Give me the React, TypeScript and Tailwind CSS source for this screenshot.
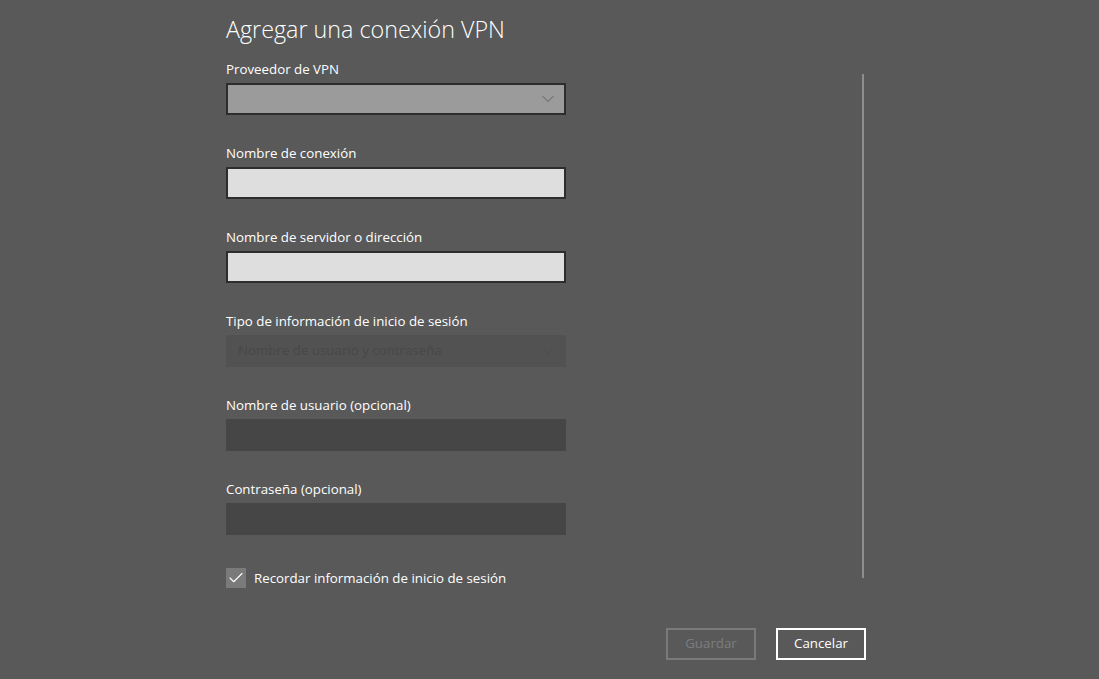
import { Check, ChevronDown } from 'lucide-react';

const fieldBase = 'h-[32px] w-[340px] border-2';

function Label({ children }: { children: React.ReactNode }) {
  return <div className="h-[20px] text-[13.3px] leading-[20px] text-white">{children}</div>;
}

export default function App() {
  return (
    <div className="flex h-[679px] w-[1099px] bg-[#595959] font-['Open_Sans',sans-serif]">
      <div className="flex w-[650px] flex-col pl-[226px]">
        <h1 className="mt-[13px] h-[32px] text-[23.3px] font-light leading-[32px] text-white">
          Agregar una conexión VPN
        </h1>

        <div className="mt-[14px] flex flex-col gap-[4px]">
          <Label>Proveedor de VPN</Label>
          <div className={`${fieldBase} flex items-center justify-end border-[#2d2d2d] bg-[#9b9b9b] pr-[6px]`}>
            <ChevronDown size={20} strokeWidth={1} className="text-[#505050]" />
          </div>
        </div>

        <div className="mt-[28px] flex flex-col gap-[4px]">
          <Label>Nombre de conexión</Label>
          <div className={`${fieldBase} border-[#2d2d2d] bg-[#dedede]`} />
        </div>

        <div className="mt-[28px] flex flex-col gap-[4px]">
          <Label>Nombre de servidor o dirección</Label>
          <div className={`${fieldBase} border-[#2d2d2d] bg-[#dedede]`} />
        </div>

        <div className="mt-[28px] flex flex-col gap-[4px]">
          <Label>Tipo de información de inicio de sesión</Label>
          <div className={`${fieldBase} flex items-center justify-between border-transparent bg-[#525252] pl-[10px] pr-[6px]`}>
            <span className="text-[13.3px] text-[#484848]">Nombre de usuario y contraseña</span>
            <ChevronDown size={20} strokeWidth={1} className="text-[#4a4a4a]" />
          </div>
        </div>

        <div className="mt-[28px] flex flex-col gap-[4px]">
          <Label>Nombre de usuario (opcional)</Label>
          <div className={`${fieldBase} border-transparent bg-[#464646]`} />
        </div>

        <div className="mt-[28px] flex flex-col gap-[4px]">
          <Label>Contraseña (opcional)</Label>
          <div className={`${fieldBase} border-transparent bg-[#464646]`} />
        </div>

        <div className="mt-[33px] flex items-center gap-[8px]">
          <div className="flex h-[20px] w-[20px] items-center justify-center bg-[#7a7a7a]">
            <Check size={18} strokeWidth={1.5} className="text-white" />
          </div>
          <span className="text-[13.3px] leading-[20px] text-white">Recordar información de inicio de sesión</span>
        </div>
      </div>

      <div className="flex w-[449px] flex-col">
        <div className="ml-[212px] mt-[74px] h-[504px] w-[2px] bg-[#8e8e8e]" />
        <div className="mt-[50px] flex gap-[20px] pl-[16px]">
          <button className="h-[32px] w-[90px] border-2 border-[#7a7a7a] text-[13.3px] text-[#7d7d7d]">Guardar</button>
          <button className="h-[32px] w-[90px] border-2 border-white text-[13.3px] text-white">Cancelar</button>
        </div>
      </div>
    </div>
  );
}
